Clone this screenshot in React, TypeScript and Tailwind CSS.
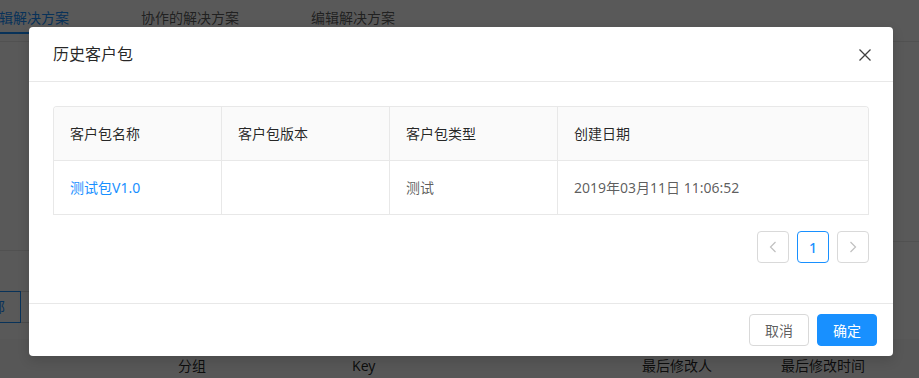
import React from 'react';

const columns = ['客户包名称', '客户包版本', '客户包类型', '创建日期'];

const rows = [
  { name: '测试包V1.0', version: '', type: '测试', created: '2019年03月11日 11:06:52' },
];

/** Page behind the modal mask */
const BackgroundPage: React.FC = () => (
  <div className="flex flex-col text-[14px] text-black/65">
    {/* Tabs */}
    <div className="h-[42px] border-b border-[#e8e8e8]">
      <div className="-ml-[15px] flex gap-[72px]">
        <div className="h-[34px] border-b-2 border-[#1890ff] pt-[7px] leading-[22px] text-[#1890ff]">编辑解决方案</div>
        <div className="h-[34px] pt-[7px] leading-[22px]">协作的解决方案</div>
        <div className="h-[34px] pt-[7px] leading-[22px]">编辑解决方案</div>
      </div>
    </div>

    <div className="flex">
      <div className="h-[209px] w-[460px] border-b border-[#e8e8e8]" />
      <div className="h-[200px] flex-1 border-b border-[#e8e8e8]" />
    </div>

    {/* Radio group */}
    <div className="mt-[40px] -ml-[39px] flex">
      <div className="h-[32px] border border-[#1890ff] px-[15px] leading-[30px] text-[#1890ff]">全部</div>
      <div className="h-[32px] border border-l-0 border-[#d9d9d9] px-[15px] leading-[30px]">已发布</div>
    </div>

    {/* Table header */}
    <div className="mt-[16px] flex bg-[#fafafa] text-black/85">
      <div className="w-[162px]" />
      <div className="w-[174px] px-[16px] py-[16px] leading-[22px]">分组</div>
      <div className="w-[290px] px-[16px] py-[16px] leading-[22px]">Key</div>
      <div className="w-[139px] px-[16px] py-[16px] leading-[22px]">最后修改人</div>
      <div className="flex-1 px-[16px] py-[16px] leading-[22px]">最后修改时间</div>
    </div>
  </div>
);

const ChevronLeft = () => (
  <svg width="8" height="12" viewBox="0 0 8 12" fill="none">
    <path d="M6.5 1 L1.5 6 L6.5 11" stroke="currentColor" strokeWidth="1.2" />
  </svg>
);

const ChevronRight = () => (
  <svg width="8" height="12" viewBox="0 0 8 12" fill="none">
    <path d="M1.5 1 L6.5 6 L1.5 11" stroke="currentColor" strokeWidth="1.2" />
  </svg>
);

const CloseIcon = () => (
  <svg width="12" height="12" viewBox="0 0 12 12" fill="none">
    <path d="M0.5 0.5 L11.5 11.5 M11.5 0.5 L0.5 11.5" stroke="currentColor" strokeWidth="1.3" />
  </svg>
);

/** History client package modal */
const HistoryModal: React.FC = () => (
  <div className="absolute left-[29px] top-[27px] w-[864px] rounded-[4px] bg-white shadow-[0_4px_12px_rgba(0,0,0,0.15)]">
    {/* Header */}
    <div className="border-b border-[#e8e8e8] px-[24px] py-[16px]">
      <div className="text-[16px] leading-[22px] text-black/85">历史客户包</div>
    </div>
    <button className="absolute right-0 top-0 flex h-[56px] w-[56px] items-center justify-center text-black/75" aria-label="Close">
      <CloseIcon />
    </button>

    {/* Body */}
    <div className="p-[24px]">
      <div className="overflow-hidden rounded-t-[4px] border border-b-0 border-[#e8e8e8] text-[14px]">
        <div className="grid grid-cols-[168px_168px_168px_1fr] bg-[#fafafa] text-black/85">
          {columns.map((c, i) => (
            <div
              key={c}
              className={`border-b border-[#e8e8e8] px-[16px] py-[16px] leading-[21px] ${i < 3 ? 'border-r' : ''}`}
            >
              {c}
            </div>
          ))}
        </div>
        {rows.map((r) => (
          <div key={r.name} className="grid grid-cols-[168px_168px_168px_1fr] text-black/65">
            <div className="border-b border-r border-[#e8e8e8] px-[16px] py-[16px] leading-[21px] text-[#1890ff]">{r.name}</div>
            <div className="border-b border-r border-[#e8e8e8] px-[16px] py-[16px] leading-[21px]">{r.version}</div>
            <div className="border-b border-r border-[#e8e8e8] px-[16px] py-[16px] leading-[21px]">{r.type}</div>
            <div className="border-b border-[#e8e8e8] px-[16px] py-[16px] leading-[21px]">{r.created}</div>
          </div>
        ))}
      </div>

      {/* Pagination */}
      <div className="mt-[16px] mb-[16px] flex justify-end gap-[8px]">
        <div className="flex h-[32px] w-[32px] items-center justify-center rounded-[4px] border border-[#d9d9d9] text-black/25">
          <ChevronLeft />
        </div>
        <div className="flex h-[32px] w-[32px] items-center justify-center rounded-[4px] border border-[#1890ff] text-[14px] font-medium text-[#1890ff]">
          1
        </div>
        <div className="flex h-[32px] w-[32px] items-center justify-center rounded-[4px] border border-[#d9d9d9] text-black/25">
          <ChevronRight />
        </div>
      </div>
    </div>

    {/* Footer */}
    <div className="flex justify-end gap-[8px] border-t border-[#e8e8e8] px-[16px] py-[10px]">
      <button className="h-[32px] rounded-[4px] border border-[#d9d9d9] bg-white px-[15px] text-[14px] text-black/65">取消</button>
      <button className="h-[32px] rounded-[4px] border border-[#1890ff] bg-[#1890ff] px-[15px] text-[14px] text-white">确定</button>
    </div>
  </div>
);

export default function App() {
  return (
    <div className="relative h-[378px] w-[919px] overflow-hidden bg-white font-['Segoe_UI','Noto_Sans','Noto_Sans_CJK_SC',sans-serif]">
      <BackgroundPage />
      <div className="absolute inset-0 bg-[rgba(0,0,0,0.65)]" />
      <HistoryModal />
    </div>
  );
}
